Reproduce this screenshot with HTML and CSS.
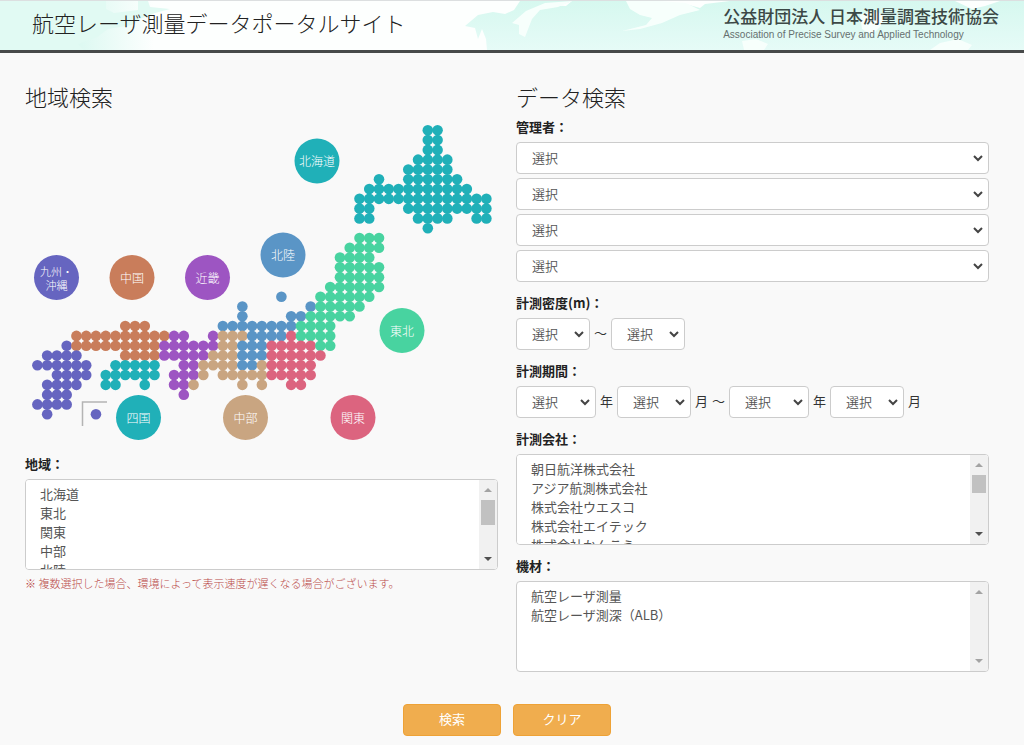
FILE: index.html
```html
<!DOCTYPE html>
<html lang="ja">
<head>
<meta charset="utf-8">
<meta name="viewport" content="width=device-width, initial-scale=1">
<title>航空レーザ測量データポータルサイト</title>
<link rel="stylesheet" href="styles.css">
</head>
<body>
<header class="site-header">
  <svg class="header-art" viewBox="0 0 1024 49" preserveAspectRatio="none" aria-hidden="true">
    <defs>
      <linearGradient id="sea" x1="0" x2="1" y1="0" y2="0">
        <stop offset="0" stop-color="#d9f8ef"/>
        <stop offset="0.08" stop-color="#def9f2"/>
        <stop offset="0.15" stop-color="#fdfffe"/>
        <stop offset="1" stop-color="#fdfffe"/>
      </linearGradient>
      <linearGradient id="fade" x1="0" x2="0" y1="0" y2="1">
        <stop offset="0" stop-color="#d6f8ef"/>
        <stop offset="1" stop-color="#e6fbf7"/>
      </linearGradient>
    </defs>
    <rect width="1024" height="49" fill="url(#sea)"/>
    <path fill="#e1faf3" d="M0 0H106L106 8 114 12 138 9 138 0H148L150 6 170 8 155 12 140 18 132 24 108 28 97 36 78 43 84 49H0Z"/>
    <path fill="url(#fade)" d="M465 25 478 14 493 11 505 13 514 9 520 0H572L558 5 540 7 532 18 525 36 519 33 522 22 530 12 541 4 566 5 572 0H627L632 8 647 15 655 12 664 18 658 26 640 28 622 30 650 25 672 12 675 5 668 2 682 2 700 7 705 3 730 0H955L972 8 985 5 1000 0H1024V49H487L486 38 482 28 478 38 475 27Z"/>
    <path fill="#f7fffc" d="M512 22 526 10 545 2 572 0 558 6 540 9 532 18 525 36 519 33 519 24ZM626 0H660L686 2 700 9 680 14 662 22 640 28 622 30 646 24 652 17 640 14 630 8ZM742 40 756 38 768 43 764 49H744ZM860 14 872 10 886 14 880 26 872 34 862 28ZM940 42 958 38 972 44 968 49H930Z"/>
  </svg>
  <h1 class="site-title">航空レーザ測量データポータルサイト</h1>
  <div class="association">
    <div class="association-name">公益財団法人 日本測量調査技術協会</div>
    <div class="association-sub">Association of Precise Survey and Applied Technology</div>
  </div>
</header>

<main>
  <form class="search">
    <div class="columns">
      <section class="column">
        <h2 class="heading">地域検索</h2>
        <svg class="map" id="map" viewBox="25 120 473 322" role="group" aria-label="地域マップ">
          <g id="dots"></g>
          <path d="M82.500 426V402H107" fill="none" stroke="#b4b4b4" stroke-width="1.500"/>
          <g id="regions"></g>
        </svg>
        <div class="field">
          <label class="label" for="area">地域：</label>
          <div class="list">
            <select class="listbox" id="area" multiple>
              <option>北海道</option><option>東北</option><option>関東</option><option>中部</option><option>北陸</option><option>近畿</option><option>中国</option><option>四国</option><option>九州・沖縄</option>
            </select>
            <div class="scrollbar" aria-hidden="true"><i class="up"></i><i class="thumb"></i><i class="down"></i></div>
          </div>
          <p class="note">※ 複数選択した場合、環境によって表示速度が遅くなる場合がございます。</p>
        </div>
      </section>

      <section class="column">
        <h2 class="heading">データ検索</h2>
        <div class="field">
          <label class="label" for="manager">管理者：</label>
          <div class="stack">
            <select class="dropdown" id="manager"><option>選択</option></select>
            <select class="dropdown" aria-label="管理者 2"><option>選択</option></select>
            <select class="dropdown" aria-label="管理者 3"><option>選択</option></select>
            <select class="dropdown" aria-label="管理者 4"><option>選択</option></select>
          </div>
        </div>
        <div class="field">
          <label class="label" for="density">計測密度(m)：</label>
          <div class="range">
            <select class="dropdown short" id="density"><option>選択</option></select>
            <span>～</span>
            <select class="dropdown short" aria-label="計測密度 上限"><option>選択</option></select>
          </div>
        </div>
        <div class="field">
          <label class="label" for="year">計測期間：</label>
          <div class="range">
            <select class="dropdown year" id="year"><option>選択</option></select>
            <span>年</span>
            <select class="dropdown short" aria-label="開始月"><option>選択</option></select>
            <span>月</span>
            <span>～</span>
            <select class="dropdown year" aria-label="終了年"><option>選択</option></select>
            <span>年</span>
            <select class="dropdown short" aria-label="終了月"><option>選択</option></select>
            <span>月</span>
          </div>
        </div>
        <div class="field">
          <label class="label" for="company">計測会社：</label>
          <div class="list">
            <select class="listbox" id="company" multiple>
              <option>朝日航洋株式会社</option><option>アジア航測株式会社</option><option>株式会社ウエスコ</option><option>株式会社エイテック</option><option>株式会社かんこう</option><option>国際航業株式会社</option><option>株式会社GIS関西</option><option>株式会社シン技術コンサル</option><option>大和測量設計株式会社</option><option>中日本航空株式会社</option><option>株式会社ナカノアイシステム</option><option>株式会社パスコ</option><option>東日本総合計画株式会社</option><option>北海道航測株式会社</option>
            </select>
            <div class="scrollbar" aria-hidden="true"><i class="up"></i><i class="thumb small"></i><i class="down"></i></div>
          </div>
        </div>
        <div class="field">
          <label class="label" for="equipment">機材：</label>
          <div class="list">
            <select class="listbox" id="equipment" multiple>
              <option>航空レーザ測量</option><option>航空レーザ測深（ALB）</option>
            </select>
            <div class="scrollbar" aria-hidden="true"><i class="up"></i><i class="down disabled"></i></div>
          </div>
        </div>
      </section>
    </div>
    <div class="actions">
      <button class="button" type="submit">検索</button>
      <button class="button" type="reset">クリア</button>
    </div>
  </form>
</main>
<script src="map.js"></script>
</body>
</html>
```

FILE: styles.css
```css
* {
  box-sizing: border-box;
}

body {
  margin: 0;
  background: #f9f9f9;
  color: #333;
  font-family: "Noto Sans CJK JP", "Noto Sans", sans-serif;
  font-size: 13px;
  line-height: 20px;
}

.site-header {
  position: relative;
  display: flex;
  justify-content: space-between;
  padding: 5px 25px 7px 32px;
  border-top: 1px solid #dcdfe0;
  border-bottom: 3px solid #474a4a;
}

.header-art {
  position: absolute;
  inset: 0;
  z-index: -1;
  width: 100%;
  height: 100%;
}

.site-title,
.heading {
  margin: 0;
  color: #222;
  font-size: 22px;
  font-weight: 300;
  line-height: 32px;
}

.association {
  color: #3c4846;
}

.association-name {
  font-size: 17px;
  font-weight: 500;
  line-height: 20px;
}

.association-sub {
  color: #66706f;
  font-family: "Liberation Sans", Arial, sans-serif;
  font-size: 10px;
  line-height: 17px;
}

.search {
  padding: 27px 35px 8px 25px;
}

.columns {
  display: grid;
  grid-template-columns: 1fr 1fr;
  gap: 18px;
}

.column {
  display: flex;
  flex-direction: column;
  min-width: 0;
}

.map {
  display: block;
  width: 100%;
  height: auto;
  margin: 8px 0 12px;
}

.region text {
  fill: #fff;
  font-size: 12px;
  font-weight: 300;
  text-anchor: middle;
}

.region .two-line {
  font-size: 11px;
}

.field {
  display: flex;
  flex-direction: column;
  margin-bottom: 11px;
}

.label {
  margin-bottom: 5px;
  color: #222;
  font-weight: 700;
}

.heading + .field {
  margin-top: 5px;
}

.stack {
  display: grid;
  gap: 4px;
}

.dropdown,
.listbox {
  border: 1px solid #ccc;
  border-radius: 4px;
  background-color: #fff;
  color: #555;
  font: 350 13px/18px "Noto Sans CJK JP", "Noto Sans", sans-serif;
  outline: none;
}

.dropdown {
  appearance: none;
  width: 100%;
  height: 32px;
  padding: 0 24px 0 15px;
  background-image: url("data:image/svg+xml,%3Csvg xmlns='http://www.w3.org/2000/svg' width='10' height='7'%3E%3Cpath d='M1 1l4 4 4-4' fill='none' stroke='%23444' stroke-width='2'/%3E%3C/svg%3E");
  background-repeat: no-repeat;
  background-position: right 5px center;
}

.range {
  display: flex;
  flex-wrap: wrap;
  gap: 4px;
}

.range span {
  line-height: 30px;
}

.short {
  width: 74px;
}

.year {
  width: 80px;
}

.list {
  position: relative;
}

.listbox {
  display: block;
  width: 100%;
  height: 91px;
  padding: 4px 0 0 12px;
  overflow-y: scroll;
  scrollbar-width: none;
}

.listbox option {
  min-height: 19px;
  padding: 0 2px;
}

.scrollbar {
  position: absolute;
  top: 1px;
  right: 1px;
  bottom: 1px;
  display: flex;
  flex-direction: column;
  width: 18px;
  border-radius: 0 3px 3px 0;
  background: #f1f1f1;
  pointer-events: none;
}

.up,
.down {
  height: 20px;
  background: center / 8px 4px no-repeat;
}

.up {
  background-image: url("data:image/svg+xml,%3Csvg xmlns='http://www.w3.org/2000/svg' width='8' height='4'%3E%3Cpath d='M0 4l4-4 4 4z' fill='%23a3a3a3'/%3E%3C/svg%3E");
}

.down {
  margin-top: auto;
  background-image: url("data:image/svg+xml,%3Csvg xmlns='http://www.w3.org/2000/svg' width='8' height='4'%3E%3Cpath d='M0 0l4 4 4-4z' fill='%23505050'/%3E%3C/svg%3E");
}

.down.disabled {
  background-image: url("data:image/svg+xml,%3Csvg xmlns='http://www.w3.org/2000/svg' width='8' height='4'%3E%3Cpath d='M0 0l4 4 4-4z' fill='%23a3a3a3'/%3E%3C/svg%3E");
}

.thumb {
  height: 25px;
  margin: 0 2px;
  background: #c1c1c1;
}

.thumb.small {
  height: 18px;
}

.note {
  margin: 3px 0 0;
  color: #b94a48;
  font-size: 11px;
  font-weight: 300;
}

.actions {
  display: flex;
  justify-content: center;
  gap: 12px;
  margin-top: 21px;
}

.button {
  width: 98px;
  height: 32px;
  padding: 0 0 2px;
  border: 1px solid #eea236;
  border-radius: 4px;
  background: #f0ad4e;
  color: #fff;
  font: 400 13px/20px "Noto Sans CJK JP", "Noto Sans", sans-serif;
}
```

FILE: map.js
```js
const SVG = "http://www.w3.org/2000/svg";

const colors = {
  H: "#20b0b8", T: "#48d3a0", R: "#dc647f", C: "#c9a581", B: "#5a95c6",
  P: "#9d55c2", O: "#c97d5b", S: "#20b0b8", K: "#6665c0"
};

// Each row lists runs of dots: region letter, first column, last column.
const rows = [
  "H40-41", "H40-41", "H40-41", "H39-42", "H38-42", "H35-35 H38-43", "H34-44", "H33-46",
  "H33-34 H38-46", "H33-34 H39-42 H45-46", "H40-40",
  "T33-35", "T32-35", "T31-34", "T31-35", "T31-35", "T30-35",
  "B25-25 T29-34", "B21-21 B28-28 T29-33", "B21-21 B26-27 T28-32",
  "O9-11 B19-26 T27-30",
  "O4-13 P14-15 P18-18 C19-21 B22-25 R26-26 T27-30",
  "K3-3 O4-12 P13-18 C19-20 B21-23 R24-28 T29-30",
  "K1-4 O9-12 P13-17 C18-20 B21-23 R24-29",
  "K0-5 S8-12 P15-16 C17-20 B21-22 C23-23 R24-28",
  "K2-5 S7-12 P14-16 C17-17 C19-23 R24-28",
  "K1-4 S7-8 S11-11 P14-15 C16-16 C21-21 C23-23 R26-27",
  "K1-3 P15-15", "K0-3", "K1-1 K6-6"
];

const regions = [
  ["H", 317, 161, "北海道"], ["B", 283, 255, "北陸"], ["K", 56.5, 277.5, "九州・", "沖縄"],
  ["O", 132, 277.5, "中国"], ["P", 207.5, 277.5, "近畿"], ["T", 402, 330.5, "東北"],
  ["S", 138.5, 417.5, "四国"], ["C", 245.5, 417.5, "中部"], ["R", 353, 417.5, "関東"]
];

function add(parent, name, attrs, text) {
  const el = document.createElementNS(SVG, name);
  for (const key in attrs) el.setAttribute(key, attrs[key]);
  if (text) el.textContent = text;
  parent.appendChild(el);
  return el;
}

const dots = document.getElementById("dots");
rows.forEach((row, r) => {
  for (const run of row.split(" ")) {
    const [first, last] = run.slice(1).split("-").map(Number);
    for (let c = first; c <= last; c++) {
      add(dots, "circle", { r: 5.3, cx: 37.4 + c * 9.76, cy: 130.3 + r * 9.79, fill: colors[run[0]] });
    }
  }
});

const group = document.getElementById("regions");
for (const [key, x, y, ...lines] of regions) {
  const link = add(group, "a", { class: "region", href: "#area" });
  add(link, "circle", { r: 22.5, cx: x, cy: y, fill: colors[key] });
  lines.forEach((line, i) => {
    add(link, "text", {
      class: lines.length > 1 ? "two-line" : "one-line",
      x: x,
      y: y + 5 + (i * 2 - lines.length + 1) * 7
    }, line);
  });
}
```
